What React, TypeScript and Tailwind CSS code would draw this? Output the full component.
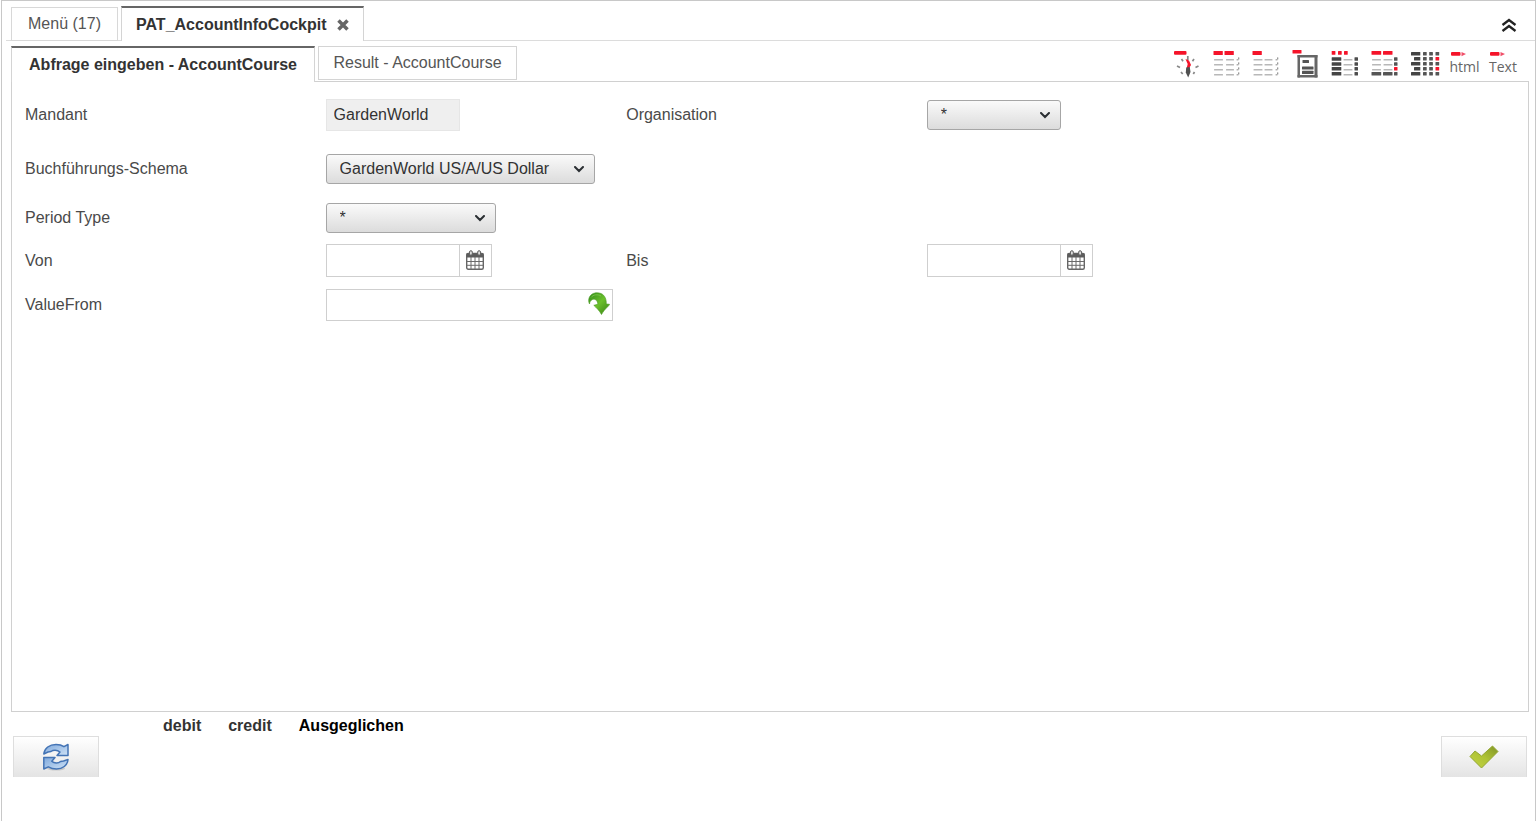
import { ReactNode } from 'react';

const RED = '#f5142a';
const DARK = '#555555';
const LIGHT = '#b8b8b8';

// x, y, width, height, fill
type Bar = [number, number, number, number, string];

const ROWS = [9, 14, 19, 24];

const lightGrid = (columns: [number, number][]): Bar[] =>
  ROWS.flatMap((y) => columns.map(([x, w]): Bar => [x, y, w, 1.6, LIGHT]));

const tickColumn = (x: number): Bar[] => ROWS.flatMap((y): Bar[] => [
  [x, y, 2, 1.6, '#b0b0b0'],
  [x + 1.6, y - 1.8, 1.2, 2.4, '#909090'],
]);

const toolbarIcons: { label: string; bars: Bar[] }[] = [
  {
    label: 'Spalten',
    bars: [[0.5, 1, 9.3, 4, RED], [11.5, 1, 9.3, 4, RED], ...lightGrid([[1, 9], [13, 8]]), ...tickColumn(23.5)],
  },
  {
    label: 'Spalte',
    bars: [[0.5, 1, 9.3, 4, RED], ...lightGrid([[1.5, 9], [12.5, 8]]), ...tickColumn(23.5)],
  },
  {
    label: 'Dokument',
    bars: [
      [0.5, 0, 9, 3.5, RED],
      [5.5, 5, 20, 2.5, '#666666'],
      [5.5, 5, 2.5, 22.5, '#666666'],
      [22.5, 5, 3, 22.5, '#666666'],
      [5.5, 25, 20, 2.5, '#666666'],
      [10.5, 10, 6.5, 3, DARK],
      [10, 16.5, 11.5, 3, DARK],
      [10, 20.8, 11.5, 3.2, DARK],
    ],
  },
  {
    label: 'Gruppen',
    bars: [
      [0.7, 1, 3.7, 3.7, RED], [7, 1, 3.7, 3.7, RED], [13, 1, 3.7, 3.7, RED],
      ...[7.3, 12.2, 17.1, 22].map((y): Bar => [0.7, y, 9.6, 3.5, '#444444']),
      ...lightGrid([[12.5, 9]]),
      ...[7.3, 12.2, 17.1, 22].map((y): Bar => [23.5, y, 3.5, 3.5, '#4d4d4d']),
    ],
  },
  {
    label: 'Summen',
    bars: [
      [0.5, 1, 9.7, 3.7, RED], [12, 1, 9.5, 3.7, RED],
      ...lightGrid([[1, 9], [12.5, 9]]).filter((bar) => bar[1] < 24),
      [0.5, 22, 9.7, 3.5, DARK], [12, 22, 9.5, 3.5, DARK],
      [23, 7.3, 3.5, 3.5, DARK], [23, 12.2, 3.5, 3.5, DARK], [23, 17.1, 3.5, 3.5, RED], [23, 22, 3.5, 3.5, DARK],
    ],
  },
  {
    label: 'Matrix',
    bars: [2, 7, 12, 17, 22].flatMap((y, i): Bar[] => [
      [i % 2 ? 4 : 1, y, i % 2 ? 6.3 : 9.3, 3.6, '#444444'],
      [13, y, 3.7, 3.5, DARK],
      [19.2, y, 3.7, 3.5, DARK],
      [25.5, y, 3.7, 3.5, i % 2 ? RED : DARK],
    ]),
  },
];

function ToolButton({ label, children }: { label: string; children: ReactNode }) {
  return (
    <button type="button" aria-label={label} className="h-7 w-7 shrink-0">
      {children}
    </button>
  );
}

function CompassIcon() {
  return (
    <svg viewBox="0 0 28 28" className="h-7 w-7">
      <rect x="1" y="1" width="12.5" height="3.700" rx="1" fill={RED} />
      <path d="M14.800 6v4M8.500 9l1.500 2.200M21 9l-1.500 2.200M4 16l3 1.500M22.500 17.500l3-1.500M8 22l1.700 2M21.500 22l-1.200 2" stroke="#888" strokeWidth="1.700" />
      <path d="M12.500 9l3.500 1.500 2 4.500-1.800 3h-2.500l1-4z" fill={RED} />
      <path d="M13.200 17.500l3.600-0.500 0.700 5-2.300 5.500-2.400-5z" fill="#505050" />
    </svg>
  );
}

// Small export icon: red arrow above the format name
function FormatIcon({ name }: { name: string }) {
  return (
    <span className="flex flex-col items-start">
      <svg viewBox="0 0 18 5" className="h-[5px] w-[18px]">
        <rect x="1" y="0" width="9.500" height="3.700" rx="1" fill={RED} />
        <path d="M11.500 0l4.500 2-4.500 2.300z" fill="#f0506a" />
      </svg>
      <span className="font-['Open_Sans',sans-serif] text-sm leading-5 text-[#666]">{name}</span>
    </span>
  );
}

function Toolbar() {
  return (
    <div className="ml-auto mr-3 flex w-[344px] items-start justify-between pt-1">
      <ToolButton label="Kompass">
        <CompassIcon />
      </ToolButton>
      {toolbarIcons.map((icon) => (
        <ToolButton key={icon.label} label={icon.label}>
          <svg viewBox="0 0 28 28" className="h-7 w-7 overflow-visible">
            {icon.bars.map(([x, y, width, height, fill], i) => (
              <rect key={i} x={x} y={y} width={width} height={height} fill={fill} rx="0.5" />
            ))}
          </svg>
        </ToolButton>
      ))}
      <ToolButton label="html">
        <FormatIcon name="html" />
      </ToolButton>
      <ToolButton label="Text">
        <FormatIcon name="Text" />
      </ToolButton>
    </div>
  );
}

function SelectField({ id, value, className }: { id: string; value: string; className: string }) {
  return (
    <div className={`relative h-[30px] ${className}`}>
      <select
        id={id}
        defaultValue={value}
        className="h-full w-full appearance-none rounded-[3px] border border-[#a6a6a6] bg-linear-to-b from-[#fafafa] to-[#dcdcdc] pl-[13px] pr-8 text-base leading-5 text-[#333]"
      >
        <option>{value}</option>
      </select>
      <svg viewBox="0 0 10 7" className="pointer-events-none absolute right-[11px] top-3 h-[7px] w-[10px]">
        <path d="M1 1l4 4 4-4" fill="none" stroke="#2b2f33" strokeWidth="2" strokeLinecap="round" />
      </svg>
    </div>
  );
}

function CalendarIcon() {
  return (
    <svg viewBox="0 0 18 20" className="h-5 w-[18px]">
      <rect x="0.700" y="3.500" width="16.600" height="15.800" rx="1.500" fill="#fff" stroke="#666" strokeWidth="1.400" />
      <path d="M0.500 3.500h17v4h-17z" fill="#5c5c5c" />
      <path d="M1 11.500h16M1 15.300h16M5 7v12M9 7v12M13 7v12" stroke="#6b6b6b" strokeWidth="1" />
      <rect x="3.500" y="0.700" width="2.800" height="4.600" rx="1.400" fill="#ddd" stroke="#5c5c5c" />
      <rect x="11.700" y="0.700" width="2.800" height="4.600" rx="1.400" fill="#ddd" stroke="#5c5c5c" />
    </svg>
  );
}

function DateField({ id }: { id: string }) {
  return (
    <div className="flex h-[33px] w-[166px] border border-[#cfcfcf]">
      <input id={id} type="text" className="w-full min-w-0 flex-1 px-2 text-base outline-none" />
      <button type="button" aria-label="Kalender" className="flex w-8 items-start justify-center border-l border-[#cfcfcf] pt-[5px]">
        <CalendarIcon />
      </button>
    </div>
  );
}

function Label({ htmlFor, children }: { htmlFor: string; children: ReactNode }) {
  return (
    <label htmlFor={htmlFor} className="text-base leading-5 text-[#4a4a4a]">
      {children}
    </label>
  );
}

function GreenArrowIcon() {
  return (
    <svg viewBox="0 0 22 24" className="h-6 w-[22px]">
      <defs>
        <linearGradient id="green" x1="0" y1="0" x2="1" y2="1">
          <stop offset="0" stopColor="#2f8a1a" />
          <stop offset="0.500" stopColor="#6cc02c" />
          <stop offset="1" stopColor="#357f12" />
        </linearGradient>
      </defs>
      <path d="M1.500 12C0 9 0.500 5 3.500 2.500 6 0.500 10 0.300 13 1.500c4 1.700 5.500 6 5.300 10.500l3.200 0.300c-0.500 2-4.500 4-8 10.200C11.500 18.500 8 15.500 5.800 13.300l4-1C9.800 9 7.500 6.500 4.500 7.500 2.700 8.200 1.700 10 1.500 12z" fill="url(#green)" stroke="#4a9a22" strokeWidth="0.600" />
      <path d="M3 5.500C5 2.500 10 2 13 4" fill="none" stroke="#93d65c" strokeWidth="1" opacity="0.600" />
    </svg>
  );
}

function RefreshIcon() {
  return (
    <svg viewBox="0 0 28 28" className="h-7 w-7">
      <defs>
        <linearGradient id="blue" x1="0" y1="0" x2="1" y2="1">
          <stop offset="0" stopColor="#7fa9dc" />
          <stop offset="1" stopColor="#cfe2f6" />
        </linearGradient>
      </defs>
      <ellipse cx="14" cy="25.500" rx="9" ry="2" fill="#c9c9c9" />
      <g fill="url(#blue)" stroke="#4474b5" strokeWidth="1.500" strokeLinejoin="round">
        <path d="M1.800 11C2.500 5 7.500 1.500 14 1.500c3 0 6 0.800 8 2.200L26 1.500v11H15l3-3.500C15 6.800 11 7 9 8.500L6 9z" />
        <path d="M26 16.500C25.500 22.500 20.500 26 14.500 26c-3.500 0-6-0.800-8.200-2.200L1.800 26V14.500H13l-3.200 3.700C12 20.500 16.500 20.500 18.500 18.500l3-0.500z" />
      </g>
    </svg>
  );
}

function CheckIcon() {
  return (
    <svg viewBox="0 0 30 24" className="h-6 w-[30px]">
      <defs>
        <linearGradient id="lime" x1="0" y1="1" x2="1" y2="0">
          <stop offset="0" stopColor="#c4d545" />
          <stop offset="0.500" stopColor="#afc335" />
          <stop offset="1" stopColor="#7f9426" />
        </linearGradient>
      </defs>
      <path d="M1 11.500L6 6l6.500 5L23.500 1l5.500 5.500L12.500 23z" fill="url(#lime)" stroke="#93a632" strokeWidth="1" strokeLinejoin="round" />
    </svg>
  );
}

export default function App() {
  return (
    <div className="min-h-screen bg-white pl-px font-['Liberation_Sans',sans-serif] text-base">
      <div className="flex min-h-screen flex-col border-l border-r border-t border-[#c8c8c8]">
        <header className="ml-1 flex h-10 items-end border-b border-[#dcdcdc] pl-[5px]">
          <button type="button" className="-mb-px h-[34px] w-[107px] border border-[#d8d8d8] leading-5 text-[#555]">
            Menü (17)
          </button>
          <div className="-mb-px ml-[3px] flex h-[35px] w-[243px] items-center border-x border-t-2 border-x-[#d4d4d4] border-t-[#666] bg-white pl-[14px] pr-[14px]">
            <button type="button" className="flex-1 whitespace-nowrap text-left font-bold leading-5 text-[#333]">
              PAT_AccountInfoCockpit
            </button>
            <button type="button" aria-label="Schließen">
              <svg viewBox="0 0 12 12" className="h-3 w-3">
                <path d="M1.500 1.500l9 9M10.500 1.500l-9 9" stroke="#666" strokeWidth="3.500" />
              </svg>
            </button>
          </div>
          <button type="button" aria-label="Einklappen" className="mb-2 ml-auto mr-[18px]">
            <svg viewBox="0 0 16 14" className="h-[14px] w-4">
              <path d="M1.500 7l6.500-5 6.500 5M1.500 13l6.500-5 6.500 5" fill="none" stroke="#222" strokeWidth="2.300" />
            </svg>
          </button>
        </header>

        <div className="ml-[9px] mr-[6px] mt-[5px] flex h-[35px] items-start">
          <button
            type="button"
            className="relative z-10 h-9 w-[304px] whitespace-nowrap border-r border-t-2 border-r-[#d4d4d4] border-t-[#666] border-l border-l-[#d4d4d4] bg-white font-bold leading-5 text-[#333]"
          >
            Abfrage eingeben - AccountCourse
          </button>
          <button type="button" className="ml-[3px] h-[34px] w-[199px] border border-[#d4d4d4] leading-5 text-[#555]">
            Result - AccountCourse
          </button>
          <Toolbar />
        </div>

        <main className="ml-[9px] mr-[6px] flex-1 border border-[#d0d0d0] pb-4 pl-[13px] pt-[17px]">
          <div className="grid h-8 grid-cols-5 items-center">
            <Label htmlFor="mandant">Mandant</Label>
            <input
              id="mandant"
              type="text"
              readOnly
              defaultValue="GardenWorld"
              className="h-8 w-[134px] border border-[#e6e6e6] bg-[#efefef] px-[7px] text-base text-[#333]"
            />
            <Label htmlFor="organisation">Organisation</Label>
            <SelectField id="organisation" value="*" className="w-[134px]" />
          </div>
          <div className="mt-[23px] grid grid-cols-5 items-center">
            <Label htmlFor="schema">Buchführungs-Schema</Label>
            <SelectField id="schema" value="GardenWorld US/A/US Dollar" className="w-[269px]" />
          </div>
          <div className="mt-[19px] grid grid-cols-5 items-center">
            <Label htmlFor="period">Period Type</Label>
            <SelectField id="period" value="*" className="w-[170px]" />
          </div>
          <div className="mt-[11px] grid grid-cols-5 items-center">
            <Label htmlFor="von">Von</Label>
            <DateField id="von" />
            <Label htmlFor="bis">Bis</Label>
            <DateField id="bis" />
          </div>
          <div className="mt-3 grid grid-cols-5 items-center">
            <Label htmlFor="value-from">ValueFrom</Label>
            <div className="flex h-8 w-[287px] items-start border border-[#cfcfcf] pr-[2px]">
              <input id="value-from" type="text" className="h-full min-w-0 flex-1 px-2 text-base outline-none" />
              <button type="button" aria-label="Suchen" className="pt-[2px]">
                <GreenArrowIcon />
              </button>
            </div>
          </div>
        </main>

        <footer className="pb-11 pl-[11px] pr-2">
          <div className="flex h-6 items-center gap-[27px] pl-[150px] pt-1 font-bold leading-5 text-[#333]">
            <span>debit</span>
            <span>credit</span>
            <span className="text-black">Ausgeglichen</span>
          </div>
          <div className="flex justify-between">
            <button
              type="button"
              aria-label="Aktualisieren"
              className="flex h-[41px] w-[86px] items-center justify-center border-x border-t border-[#dedede] bg-linear-to-b from-white to-[#e4e4e4]"
            >
              <RefreshIcon />
            </button>
            <button
              type="button"
              aria-label="Bestätigen"
              className="flex h-[41px] w-[86px] items-center justify-center border-x border-t border-[#dedede] bg-linear-to-b from-white to-[#e4e4e4]"
            >
              <CheckIcon />
            </button>
          </div>
        </footer>
      </div>
    </div>
  );
}
